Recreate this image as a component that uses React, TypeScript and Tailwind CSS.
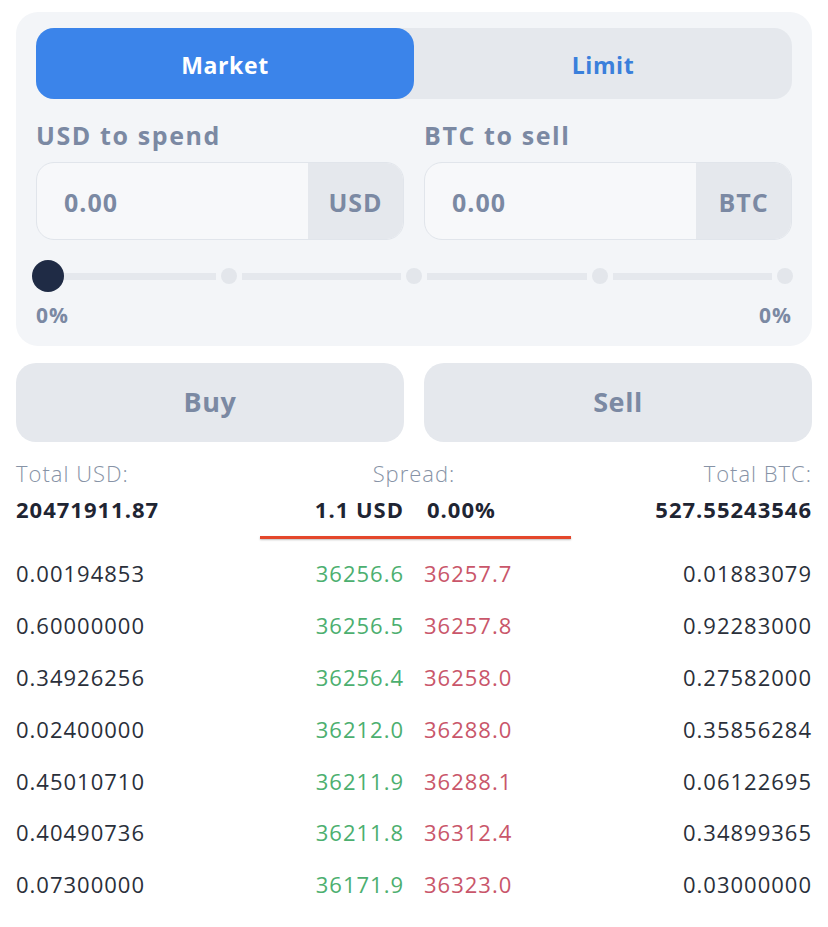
import React from 'react'

const rows = [
  ['0.00194853', '36256.6', '36257.7', '0.01883079'],
  ['0.60000000', '36256.5', '36257.8', '0.92283000'],
  ['0.34926256', '36256.4', '36258.0', '0.27582000'],
  ['0.02400000', '36212.0', '36288.0', '0.35856284'],
  ['0.45010710', '36211.9', '36288.1', '0.06122695'],
  ['0.40490736', '36211.8', '36312.4', '0.34899365'],
  ['0.07300000', '36171.9', '36323.0', '0.03000000'],
]

const AmountInput = ({ label, unit }: { label: string; unit: string }) => (
  <div className="flex flex-col">
    <div className="h-[63px] flex items-center pt-[10px] text-[25px] font-bold tracking-[1.6px] text-[#7b89a3]">{label}</div>
    <div className="flex h-[78px] rounded-[18px] border border-[#e1e5eb] bg-[#f7f8fa] overflow-hidden">
      <div className="flex-1 flex items-center pl-[27px] pt-[3px] text-[25px] font-bold tracking-[1px] text-[#7b89a3]">0.00</div>
      <div className="w-[95px] flex items-center justify-center pt-[3px] bg-[#e5e8ed] text-[25px] font-bold tracking-[1px] text-[#7b89a3]">
        {unit}
      </div>
    </div>
  </div>
)

const Slider = () => (
  <div className="relative flex items-center h-[34px] mt-[19px] -ml-[1px] -mr-[1px]">
    {[0, 1, 2, 3].map((i) => (
      <React.Fragment key={i}>
        <div className="w-[16px] h-[16px] rounded-full bg-[#e3e6eb] shrink-0" />
        <div className="flex-1 h-[7px] bg-[#e5e8ed] mx-[5px]" />
      </React.Fragment>
    ))}
    <div className="w-[16px] h-[16px] rounded-full bg-[#e3e6eb] shrink-0" />
    <div className="absolute left-[-3px] top-[1px] w-[32px] h-[32px] rounded-full bg-[#1f2b45]" />
  </div>
)

export default function App() {
  return (
    <div className="w-[828px] min-h-[927px] bg-white font-['Open_Sans',sans-serif] pt-[12px]">
      <div className="mx-[16px] rounded-[22px] bg-[#f3f5f8] px-[20px] pt-[16px] pb-[17px]">
        <div className="flex h-[71px] rounded-[18px] bg-[#e5e8ed]">
          <div className="w-[378px] flex items-center justify-center pt-[3px] rounded-[18px] bg-[#3b84ea] text-white text-[23px] font-bold tracking-[0.6px]">
            Market
          </div>
          <div className="flex-1 flex items-center justify-center pt-[3px] text-[#3a7fdb] text-[23px] font-bold tracking-[0.6px]">
            Limit
          </div>
        </div>
        <div className="grid grid-cols-2 gap-x-[20px]">
          <AmountInput label="USD to spend" unit="USD" />
          <AmountInput label="BTC to sell" unit="BTC" />
        </div>
        <Slider />
        <div className="flex justify-between mt-[8px] text-[21px] font-bold tracking-[1px] text-[#7b89a3] leading-[28px]">
          <span>0%</span>
          <span>0%</span>
        </div>
      </div>

      <div className="grid grid-cols-2 gap-x-[20px] mx-[16px] mt-[17px]">
        <button className="h-[79px] rounded-[20px] bg-[#e5e8ed] text-[27px] font-bold tracking-[0.6px] text-[#7b89a3]">Buy</button>
        <button className="h-[79px] rounded-[20px] bg-[#e5e8ed] text-[27px] font-bold tracking-[0.6px] text-[#7b89a3]">Sell</button>
      </div>

      <div className="mx-[16px] mt-[15px] grid grid-cols-[1fr_auto_1fr] text-[22px] tracking-[1px]">
        <div className="flex flex-col">
          <span className="font-light text-[#8793a6] leading-[32px]">Total USD:</span>
          <span className="font-bold text-[#1f2533] leading-[40px]">20471911.87</span>
        </div>
        <div className="flex flex-col items-center">
          <span className="font-light text-[#8793a6] leading-[32px]">Spread:</span>
          <div className="flex gap-[20px] font-bold text-[#1f2533] leading-[40px]">
            <span className="w-[100px] text-right">1.1 USD</span>
            <span className="w-[100px] pl-[3px]">0.00%</span>
          </div>
        </div>
        <div className="flex flex-col items-end">
          <span className="font-light text-[#8793a6] leading-[32px]">Total BTC:</span>
          <span className="font-bold text-[#1f2533] leading-[40px]">527.55243546</span>
        </div>
      </div>
      <div className="flex justify-center mt-[7px]">
        <div className="w-[311px] h-[3px] bg-[#e4472b] ml-[3px] shadow-[0_1px_2px_rgba(0,0,0,0.25)]" />
      </div>

      <div className="mx-[16px] mt-[9px] flex flex-col text-[22px] tracking-[1px]">
        {rows.map((r, i) => (
          <div key={i} className="grid grid-cols-[1fr_auto_1fr] h-[51.8px] items-center">
            <span className="text-[#2a2f3a]">{r[0]}</span>
            <div className="flex gap-[20px]">
              <span className="text-[#4caf6f] w-[100px] text-right">{r[1]}</span>
              <span className="text-[#c9566a] w-[100px]">{r[2]}</span>
            </div>
            <span className="text-[#2a2f3a] text-right">{r[3]}</span>
          </div>
        ))}
      </div>
    </div>
  )
}
